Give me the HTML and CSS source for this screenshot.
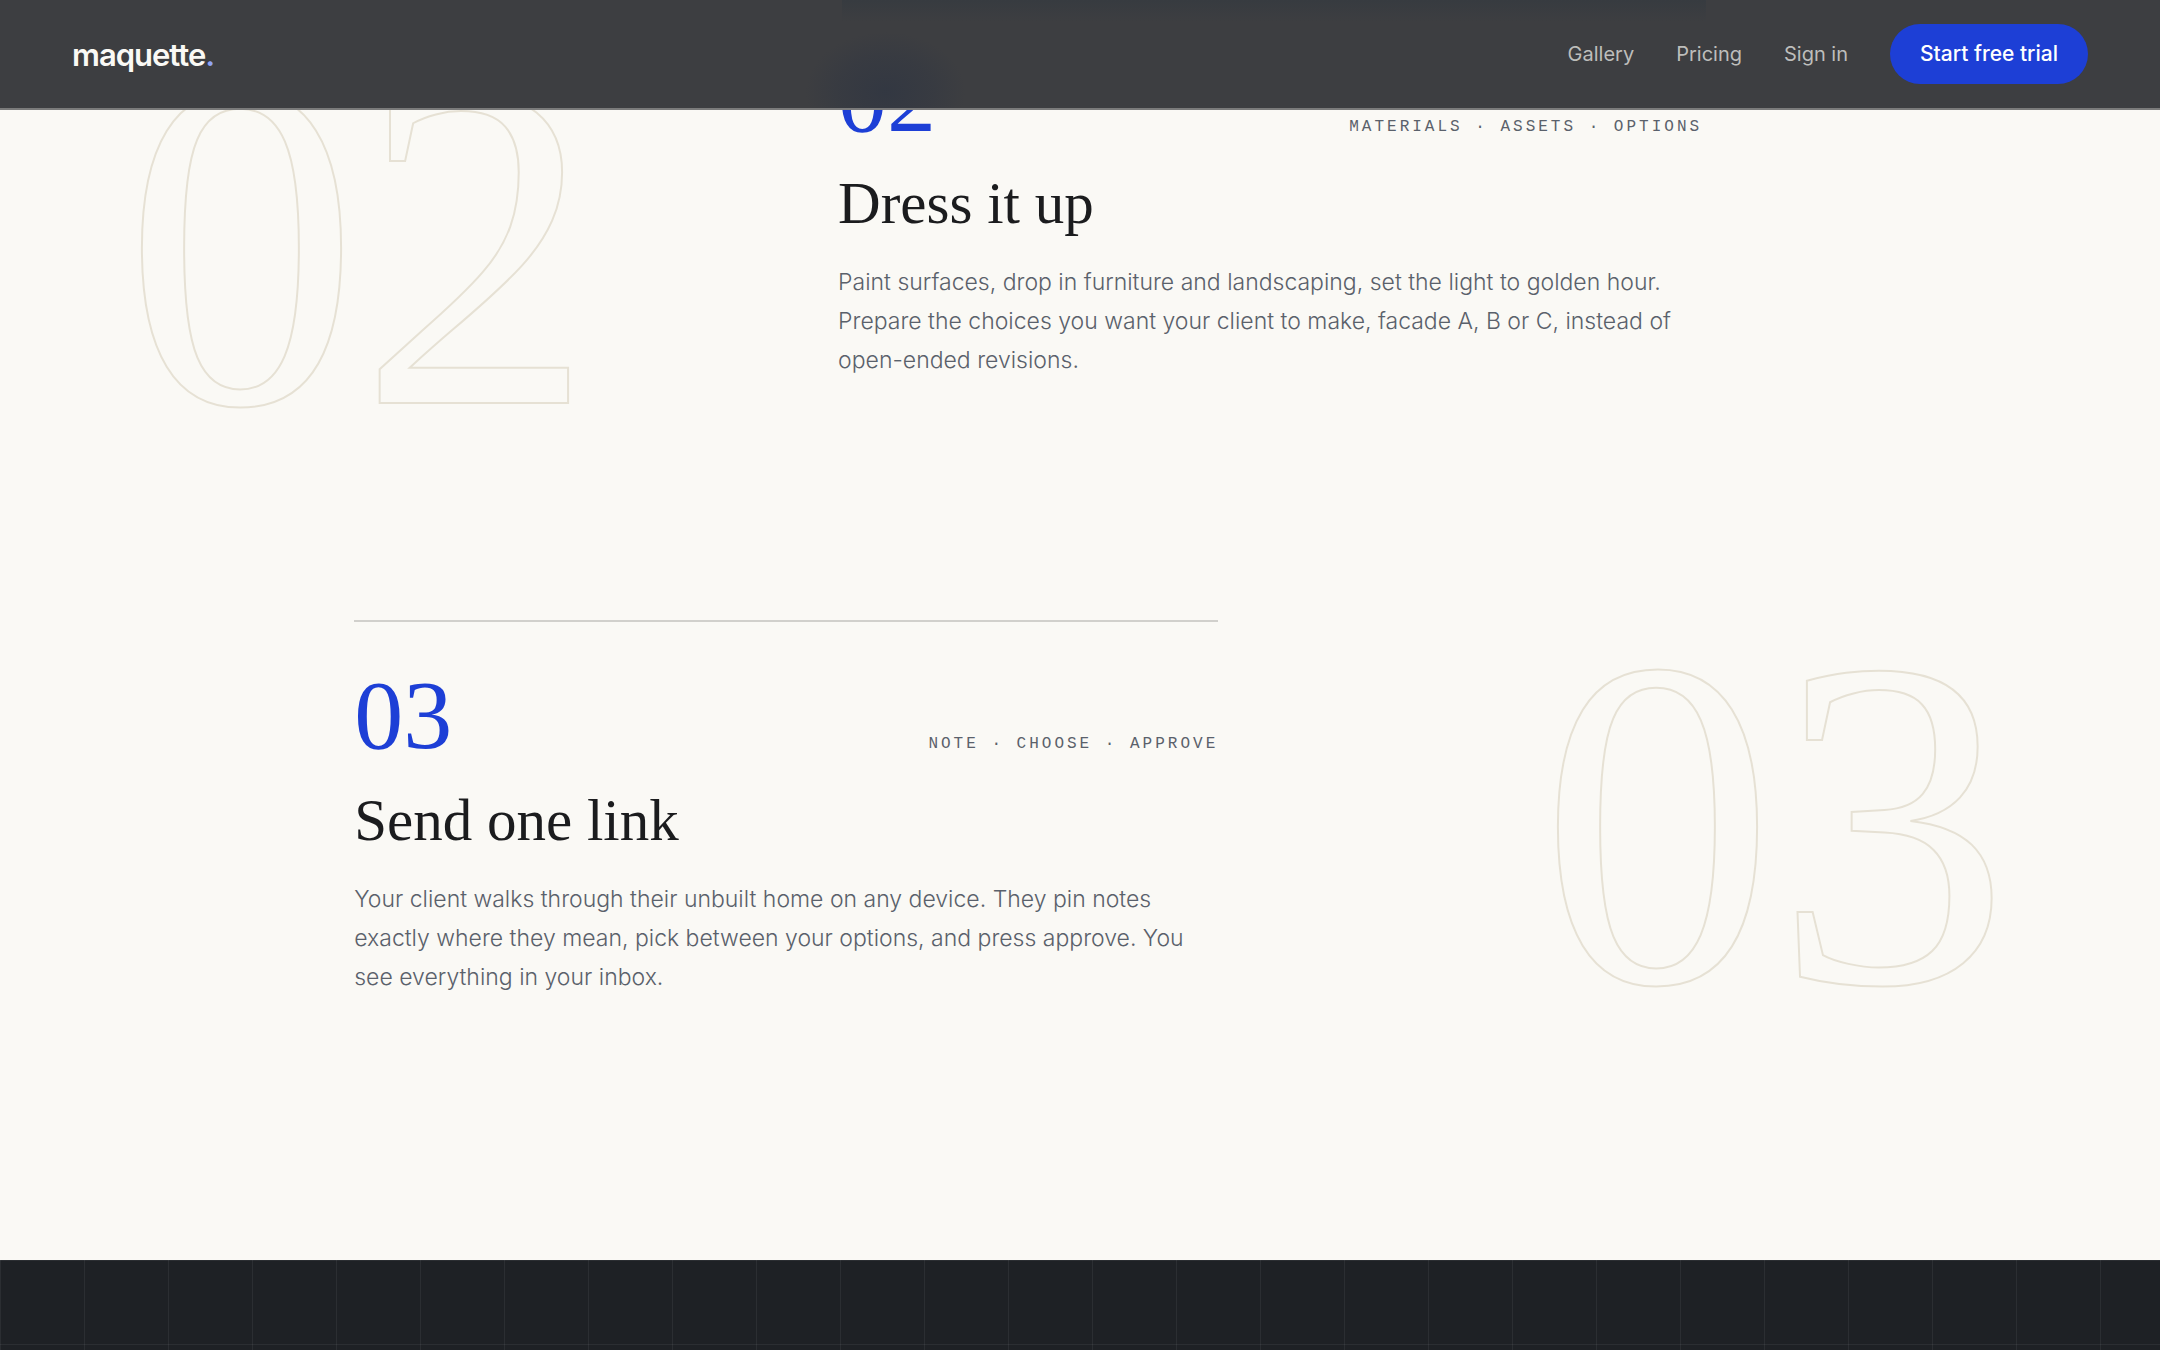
FILE: index.html
```html
<!DOCTYPE html>
<html lang="en">
<head>
    <meta charset="UTF-8">
    <meta name="viewport" content="width=device-width, initial-scale=1.0">
    <title>maquette.</title>
    <link rel="stylesheet" href="styles.css">
</head>
<body>
    <header class="nav">
        <a class="logo" href="#">maquette<span class="logo-dot">.</span></a>
        <nav class="nav-links">
            <a class="nav-link" href="#gallery">Gallery</a>
            <a class="nav-link" href="#pricing">Pricing</a>
            <a class="nav-link" href="#signin">Sign in</a>
            <a class="nav-cta" href="#trial">Start free trial</a>
        </nav>
    </header>

    <main class="steps">
        <section class="step step-right">
            <div class="ghost" aria-hidden="true">02</div>
            <div class="step-body step-active">
                <div class="step-head">
                    <span class="step-number">02</span>
                    <span class="step-tags">Materials · Assets · Options</span>
                </div>
                <h2 class="step-title">Dress it up</h2>
                <p class="step-text">Paint surfaces, drop in furniture and landscaping, set the light to golden hour. Prepare the choices you want your client to make, facade A, B or C, instead of open-ended revisions.</p>
            </div>
        </section>

        <section class="step step-left">
            <div class="step-body">
                <div class="step-head">
                    <span class="step-number">03</span>
                    <span class="step-tags">Note · Choose · Approve</span>
                </div>
                <h2 class="step-title">Send one link</h2>
                <p class="step-text">Your client walks through their unbuilt home on any device. They pin notes exactly where they mean, pick between your options, and press approve. You see everything in your inbox.</p>
            </div>
            <div class="ghost" aria-hidden="true">03</div>
        </section>
    </main>

    <section class="blueprint"></section>
</body>
</html>
```
FILE: styles.css
```css
* {
    box-sizing: border-box;
}

body {
    margin: 0;
    min-height: 100vh;
    display: flex;
    flex-direction: column;
    background: #faf9f5;
    color: #1b1c1e;
    font-family: Inter, "Open Sans", sans-serif;
}

a {
    text-decoration: none;
}

.nav {
    position: fixed;
    top: 0;
    left: 0;
    right: 0;
    z-index: 10;
    display: flex;
    justify-content: space-between;
    align-items: center;
    height: 110px;
    padding: 0 72px;
    background:
        radial-gradient(ellipse 80px 60px at 41% 92px, rgba(48, 54, 66, 0.8), rgba(48, 54, 66, 0.4) 60%, transparent) no-repeat,
        linear-gradient(to bottom, #373b40, transparent) 65% 0 / 40% 22px no-repeat,
        #3d3e41;
    border-bottom: 2px solid #7b7b7b;
}

.logo {
    color: #faf9f5;
    font-size: 31px;
    font-weight: 600;
    letter-spacing: -1px;
}

.logo-dot {
    color: #8fa3f5;
}

.nav-links {
    display: flex;
    align-items: center;
    gap: 42px;
}

.nav-link {
    color: #bdbdbb;
    font-size: 20px;
}

.nav-cta {
    padding: 0 30px;
    border-radius: 30px;
    background: #1d3fd6;
    color: #fff;
    font-size: 21px;
    font-weight: 500;
    line-height: 60px;
}

/* Steps */
.steps {
    display: flex;
    flex-direction: column;
    gap: 240px;
    padding: 3px 0 263px;
}

.step {
    display: grid;
    align-items: start;
}

.step-right {
    grid-template-columns: minmax(0, 388fr) minmax(0, 400fr) minmax(0, 212fr);
}

.step-left {
    grid-template-columns: minmax(0, 164fr) minmax(0, 400fr) minmax(0, 436fr);
}

.step-left .step-body {
    grid-column: 2;
}

.step-body {
    border-top: 2px solid #d1d0cc;
}

.step-active {
    border-top-color: #1d3fd6;
}

.step-head {
    display: flex;
    justify-content: space-between;
    align-items: baseline;
    padding-top: 45px;
}

.step-number {
    color: #1d3fd6;
    font-family: "Liberation Serif", serif;
    font-size: 98px;
    line-height: 96px;
}

.step-tags {
    color: #5a616b;
    font-family: "Liberation Mono", monospace;
    font-size: 16px;
    letter-spacing: 3px;
    text-transform: uppercase;
}

.step-title {
    margin: 25px 0 28px;
    font-family: "Liberation Serif", serif;
    font-size: 59px;
    font-weight: 400;
    line-height: 64px;
}

.step-text {
    margin: 0;
    color: #5a616b;
    font-size: 23px;
    font-weight: 300;
    line-height: 39px;
}

.ghost {
    margin-top: 34px;
    color: transparent;
    font-family: "Liberation Serif", serif;
    font-size: 470px;
    line-height: 340px;
    -webkit-text-stroke: 2px #e6e1d4;
}

.step-right .ghost {
    margin: 72px 0 -40px;
    padding-left: 124px;
}

.step-left .ghost {
    padding-right: 150px;
    text-align: right;
}

.blueprint {
    flex: 1;
    min-height: 90px;
    background-color: #1e2125;
    background-image:
        linear-gradient(to right, rgba(255, 255, 255, 0.06) 1px, transparent 1px),
        linear-gradient(to bottom, rgba(255, 255, 255, 0.06) 1px, transparent 1px);
    background-size: 84px 84px;
}
```
